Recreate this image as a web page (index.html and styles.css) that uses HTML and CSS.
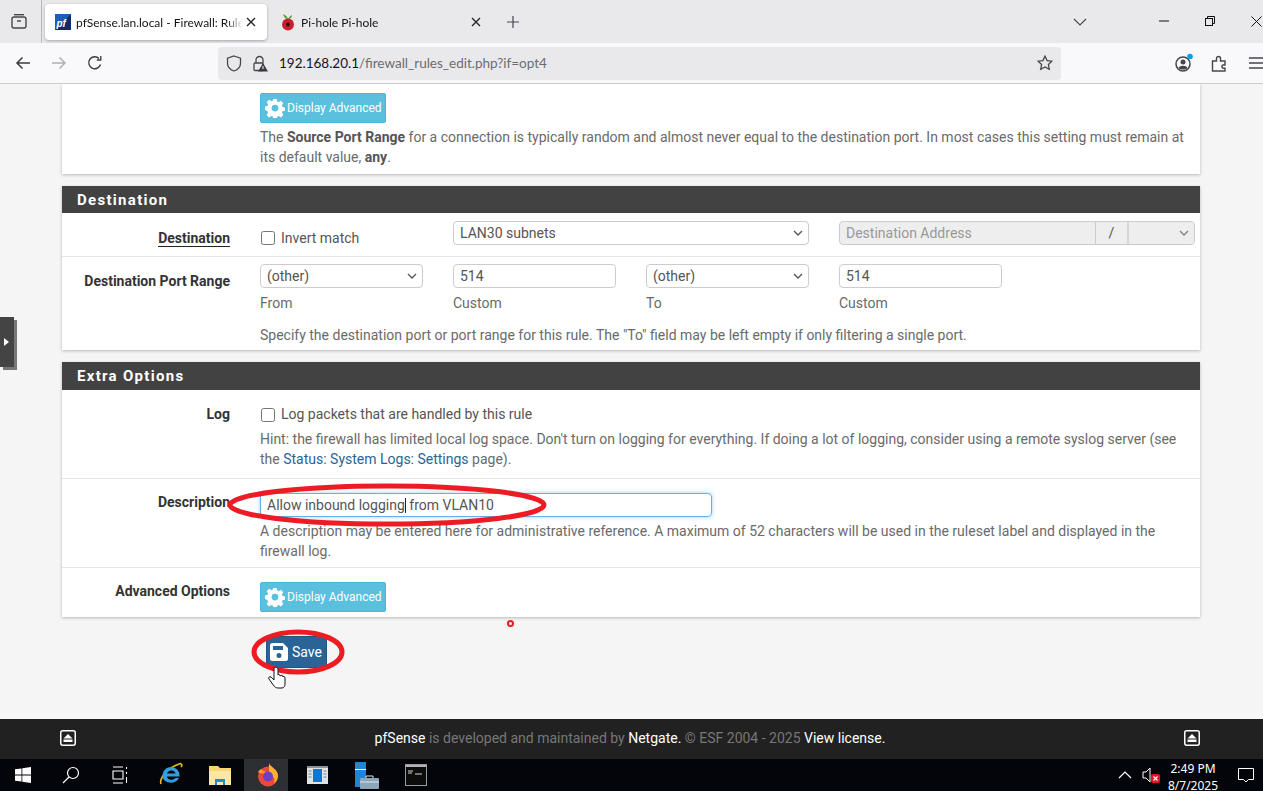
FILE: index.html
```html
<!DOCTYPE html>
<html lang="en">
<head>
    <meta charset="UTF-8">
    <title>pfSense.lan.local - Firewall: Rules: Edit</title>
    <link rel="stylesheet" href="styles.css">
</head>
<body>
    <div class="tabbar">
        <div class="tabs-btn">
            <svg width="18" height="18" viewBox="0 0 18 18" fill="none" stroke="#45454d" stroke-width="1.4"><path d="M4 2.7h10"/><rect x="2" y="5" width="14" height="11" rx="2"/><path d="M7 9h4"/></svg>
        </div>
        <div class="tab tab-active">
            <svg class="favicon" width="16" height="16" viewBox="0 0 16 16"><rect width="16" height="16" fill="#1c5fb5"/><path d="M0 16L16 0v16z" fill="#12296b"/><text x="1.5" y="12.5" class="pf-mark">pf</text></svg>
            <span class="tab-title">pfSense.lan.local - Firewall: Rules: Edit</span>
            <svg class="tab-x" width="10" height="10" viewBox="0 0 10 10" stroke="#26262b" stroke-width="1.4"><path d="M1 1l8 8M9 1L1 9"/></svg>
        </div>
        <div class="tab">
            <svg class="favicon" width="16" height="18" viewBox="0 0 16 18"><path d="M8 6C7 3 5 2 3 1c1 3 2 5 5 5zM8 6c1-2 2-3 4-4 0 2-1 4-4 4z" fill="#55a630"/><circle cx="8" cy="11.5" r="6" fill="#c9202f"/><circle cx="8" cy="11.5" r="2" fill="#3a0a10"/></svg>
            <span class="tab-title">Pi-hole Pi-hole</span>
            <svg class="tab-x" width="10" height="10" viewBox="0 0 10 10" stroke="#26262b" stroke-width="1.4"><path d="M1 1l8 8M9 1L1 9"/></svg>
        </div>
        <svg class="new-tab" width="14" height="14" viewBox="0 0 14 14" stroke="#45454d" stroke-width="1.2"><path d="M7 1v12M1 7h12"/></svg>
        <div class="tabbar-fill"></div>
        <svg class="list-all" width="14" height="8" viewBox="0 0 14 8" fill="none" stroke="#45454d" stroke-width="1.1"><path d="M1 1l6 6 6-6"/></svg>
        <div class="win-btns">
            <svg width="10" height="10" viewBox="0 0 10 10" stroke="#111" stroke-width="1"><path d="M0 5h10"/></svg>
            <svg width="10" height="10" viewBox="0 0 10 10" fill="none" stroke="#111" stroke-width="1"><rect x=".5" y="2.5" width="7" height="7"/><path d="M2.5 2.5v-2h7v7h-2"/></svg>
            <svg width="11" height="11" viewBox="0 0 11 11" stroke="#111" stroke-width="1"><path d="M.5.5l10 10M10.500.5l-10 10"/></svg>
        </div>
    </div>

    <div class="toolbar">
        <svg class="nav-icon" width="16" height="14" viewBox="0 0 16 14" fill="none" stroke="#3c3c42" stroke-width="1.5"><path d="M15 7H2M7.500 1.500L2 7l5.500 5.500"/></svg>
        <svg class="nav-icon" width="16" height="14" viewBox="0 0 16 14" fill="none" stroke="#b0b0b5" stroke-width="1.5"><path d="M1 7h13M8.500 1.500L14 7l-5.500 5.500"/></svg>
        <svg class="nav-icon nav-reload" width="16" height="16" viewBox="0 0 16 16" fill="none" stroke="#3c3c42" stroke-width="1.4"><path d="M13.500 9.500A6 6 0 1 1 12 3.500"/><path d="M13.800 1v4h-4" stroke-width="1.3"/></svg>
        <div class="urlbar">
            <svg class="url-shield" width="16" height="17" viewBox="0 0 16 17" fill="none" stroke="#45454d" stroke-width="1.3"><path d="M8 1l6.500 2.200v5C14.500 12 11.500 14.800 8 16 4.500 14.800 1.500 12 1.500 8.200v-5z"/></svg>
            <svg class="url-lock" width="16" height="17" viewBox="0 0 16 17"><path d="M4 8V5a3.500 3.500 0 0 1 7 0v3" fill="none" stroke="#45454d" stroke-width="1.300"/><rect x="2" y="8" width="9" height="7.500" rx="1" fill="none" stroke="#45454d" stroke-width="1.300"/><path d="M11 8l5 8.500H6z" fill="#3a3a40"/><path d="M11 11v3" stroke="#fff" stroke-width="1"/></svg>
            <span class="url-text"><span class="url-host">192.168.20.1</span>/firewall_rules_edit.php?if=opt4</span>
            <svg class="url-star" width="16" height="16" viewBox="0 0 16 16" fill="none" stroke="#45454d" stroke-width="1.300"><path d="M8 1.200l2.100 4.400 4.800.6-3.500 3.300.9 4.800L8 12l-4.300 2.300.9-4.800L1.100 6.200l4.800-.6z"/></svg>
        </div>
        <svg class="tool-icon tool-first" width="20" height="20" viewBox="0 0 20 20"><circle cx="9" cy="11" r="7" fill="none" stroke="#45454d" stroke-width="1.500"/><circle cx="9" cy="9" r="2.500" fill="#45454d"/><path d="M4.500 15c1-3 8-3 9 0-2 2-7 2-9 0z" fill="#45454d"/><circle cx="16" cy="3.500" r="2.800" fill="#0a9ee8"/></svg>
        <svg class="tool-icon" width="16" height="17" viewBox="0 0 16 17" fill="none" stroke="#45454d" stroke-width="1.400"><path d="M1.500 6h4V3.500a2 2 0 0 1 4 0V6h4.500v4H12a1.700 1.700 0 0 0 0 3.200h2V16H1.500z"/></svg>
        <svg class="tool-icon tool-menu" width="16" height="12" viewBox="0 0 16 12" stroke="#45454d" stroke-width="1.400"><path d="M1 1h15M1 6h15M1 11h15"/></svg>
    </div>

    <div class="page">
        <div class="sidebar-toggle"><span class="toggle-arrow"></span></div>

        <div class="panel panel-clipped">
            <div class="row">
                <div class="row-label"></div>
                <div class="row-body">
                    <a class="btn btn-info">
                        <svg class="btn-icon" width="20" height="20" viewBox="0 0 20 20"><path fill="#fff" fill-rule="evenodd" d="M8.300 1h3.400l.5 2.500 1.500.7 2.200-1.400 2.400 2.400-1.400 2.200.6 1.500 2.500.5v3.400l-2.500.5-.6 1.500 1.400 2.200-2.400 2.400-2.200-1.400-1.500.6-.5 2.400H8.300l-.5-2.400-1.500-.6-2.200 1.400-2.400-2.400 1.400-2.200-.6-1.500L0 11.800V8.400l2.500-.5.600-1.500-1.400-2.200 2.400-2.400 2.200 1.400 1.500-.7zM10 6.700a3.400 3.400 0 1 0 0 6.800 3.400 3.400 0 0 0 0-6.800z"/></svg>
                        Display Advanced
                    </a>
                    <p class="help">The <b>Source Port Range</b> for a connection is typically random and almost never equal to the destination port. In most cases this setting must remain at its default value, <b>any</b>.</p>
                </div>
            </div>
        </div>

        <div class="panel">
            <h2 class="panel-title">Destination</h2>
            <div class="row row-dest">
                <div class="row-label"><span class="underlined">Destination</span></div>
                <div class="row-body cols">
                    <label class="col check"><input type="checkbox" class="checkbox"> Invert match</label>
                    <div class="col col-wide">
                        <select class="field"><option>LAN30 subnets</option></select>
                    </div>
                    <div class="addr-group">
                        <input class="addr-input" disabled placeholder="Destination Address">
                        <span class="addr-slash">/</span>
                        <select class="addr-mask" disabled><option></option></select>
                    </div>
                </div>
            </div>
            <div class="row row-ports">
                <div class="row-label">Destination Port Range</div>
                <div class="row-body">
                    <div class="cols">
                        <div class="col"><select class="field"><option>(other)</option></select><div class="sub">From</div></div>
                        <div class="col"><input class="field" value="514"><div class="sub">Custom</div></div>
                        <div class="col"><select class="field"><option>(other)</option></select><div class="sub">To</div></div>
                        <div class="col"><input class="field" value="514"><div class="sub">Custom</div></div>
                    </div>
                    <p class="help help-ports">Specify the destination port or port range for this rule. The "To" field may be left empty if only filtering a single port.</p>
                </div>
            </div>
        </div>

        <div class="panel panel-extra">
            <h2 class="panel-title">Extra Options</h2>
            <div class="row row-log">
                <div class="row-label">Log</div>
                <div class="row-body">
                    <label class="check"><input type="checkbox" class="checkbox"> Log packets that are handled by this rule</label>
                    <p class="help">Hint: the firewall has limited local log space. Don't turn on logging for everything. If doing a lot of logging, consider using a remote syslog server (see the <a class="link">Status: System Logs: Settings</a> page).</p>
                </div>
            </div>
            <div class="row row-desc">
                <div class="row-label">Description</div>
                <div class="row-body">
                    <div class="field-focus">Allow inbound logging<span class="caret"></span> from VLAN10</div>
                    <p class="help">A description may be entered here for administrative reference. A maximum of 52 characters will be used in the ruleset label and displayed in the firewall log.</p>
                </div>
            </div>
            <div class="row row-adv">
                <div class="row-label">Advanced Options</div>
                <div class="row-body">
                    <a class="btn btn-info">
                        <svg class="btn-icon" width="20" height="20" viewBox="0 0 20 20"><path fill="#fff" fill-rule="evenodd" d="M8.300 1h3.400l.5 2.500 1.500.7 2.200-1.400 2.400 2.400-1.400 2.200.6 1.500 2.500.5v3.400l-2.500.5-.6 1.500 1.400 2.200-2.400 2.400-2.200-1.400-1.500.6-.5 2.400H8.300l-.5-2.400-1.500-.6-2.200 1.400-2.400-2.400 1.400-2.200-.6-1.500L0 11.800V8.400l2.500-.5.600-1.500-1.400-2.200 2.400-2.400 2.200 1.400 1.500-.7zM10 6.700a3.400 3.400 0 1 0 0 6.800 3.400 3.400 0 0 0 0-6.800z"/></svg>
                        Display Advanced
                    </a>
                </div>
            </div>
        </div>

        <div class="save-wrap">
            <a class="btn btn-save">
                <svg class="btn-icon" width="18" height="18" viewBox="0 0 18 18"><path fill="#fff" fill-rule="evenodd" d="M2.500 0H13l5 5v10.500a2.500 2.500 0 0 1-2.500 2.500h-13A2.500 2.500 0 0 1 0 15.500v-13A2.500 2.500 0 0 1 2.500 0zM3 3v4h10V3zM9 10a2.500 2.500 0 1 0 0 5 2.500 2.500 0 0 0 0-5z"/></svg>
                Save
            </a>
        </div>

        <!-- red marks drawn on the screenshot -->
        <svg class="marks" width="1263" height="635" viewBox="0 84 1263 635" fill="none">
            <ellipse cx="387" cy="505" rx="157" ry="19" stroke="#ed1c24" stroke-width="5"/>
            <ellipse cx="298" cy="652" rx="44" ry="20" stroke="#ed1c24" stroke-width="5"/>
            <circle cx="510.500" cy="623.500" r="2.500" stroke="#ed1c24" stroke-width="2"/>
            <path d="M274 668v12l-3-3c-2-1-3 1-2 2l5 7c1 1 2 2 4 2h4c2 0 3-2 3-4v-6c0-2-2-2-2-1 0-2-2-2-3-1 0-2-2-2-2-1v-6c0-2-4-2-4-1z" fill="#fff" stroke="#111" stroke-width="1"/>
        </svg>
    </div>

    <div class="footer">
        <svg width="16" height="16" viewBox="0 0 16 16"><rect x=".75" y=".75" width="14.500" height="14.500" rx="2" fill="#222" stroke="#fff" stroke-width="1.500"/><path d="M8 4l4.500 4.500h-9z" fill="#fff"/><path d="M3.500 9.500h9v2.500h-9z" fill="#fff"/></svg>
        <div class="footer-text"><b>pfSense</b> is developed and maintained by <b>Netgate.</b> © ESF 2004 - 2025 <b>View license.</b></div>
        <svg width="16" height="16" viewBox="0 0 16 16"><rect x=".75" y=".75" width="14.500" height="14.500" rx="2" fill="#222" stroke="#fff" stroke-width="1.500"/><path d="M8 4l4.500 4.500h-9z" fill="#fff"/><path d="M3.500 9.500h9v2.500h-9z" fill="#fff"/></svg>
    </div>

    <div class="taskbar">
        <div class="task-item">
            <svg width="16" height="16" viewBox="0 0 16 16" fill="#fff"><path d="M0 2.300l6.500-.9v6.200H0zM7.300 1.300L16 0v7.600H7.300zM0 8.400h6.500v6.200L0 13.700zM7.300 8.400H16V16l-8.700-1.200z"/></svg>
        </div>
        <div class="task-item">
            <svg width="18" height="18" viewBox="0 0 18 18" fill="none" stroke="#fff" stroke-width="1.200"><circle cx="11" cy="7" r="5.500"/><path d="M7 11l-6 6"/></svg>
        </div>
        <div class="task-item">
            <svg width="16" height="18" viewBox="0 0 16 18" fill="none" stroke="#fff" stroke-width="1.100"><path d="M1 1h10M1 17h10M1 5h10v8H1zM14.500 1v2M14.500 6v2M14.500 11v6"/></svg>
        </div>
        <div class="task-item task-ie">
            <svg width="24" height="26" viewBox="0 0 24 26"><path d="M2 22C0 17 8 6 20 2c2-1 4 1 2 3" fill="none" stroke="#e8b923" stroke-width="1.600"/><path fill="#2f9fe0" fill-rule="evenodd" d="M12 5a8.500 8.500 0 0 1 8.500 9.500H8c.3 3.500 6 4.500 8.500 1.500h3.500C17 23 4 22 3.500 14 3.500 9 7 5 12 5zM8 11.500h8.500C16 7.500 9 7.500 8 11.500z"/></svg>
        </div>
        <div class="task-item">
            <svg width="22" height="21" viewBox="0 0 22 21"><path d="M0 1h9l2 2h11v17H0z" fill="#f7d774"/><path d="M0 6h22v14H0z" fill="#fce8a3"/><path d="M6 14h10v6h-2v-3H8v3H6z" fill="#1b8fd6"/></svg>
        </div>
        <div class="task-item task-current">
            <svg width="22" height="24" viewBox="0 0 22 24"><circle cx="11" cy="13.500" r="10" fill="#e8493a"/><path d="M12 0c1 4 9 6 9 13 0 3-2 6-4 7 2-5-2-8-5-9z" fill="#ffb02e"/><path d="M1 9c1-2 3-3 4-3 0 2 3 3 5 3-3 2-6 2-9 0z" fill="#ff9a2e"/><circle cx="11" cy="13.500" r="5" fill="#6d3fc4"/></svg>
        </div>
        <div class="task-item">
            <svg width="21" height="18" viewBox="0 0 21 18"><rect width="21" height="18" fill="#dfe3e8"/><rect y="0" width="21" height="2" fill="#8a929a"/><rect x="6" y="3" width="9" height="13" fill="#0a78d4"/><path d="M1.500 5h3M1.500 8h3M1.500 11h3M16.500 5h3M16.500 8h3M16.500 11h3" stroke="#7a828a"/></svg>
        </div>
        <div class="task-item">
            <svg width="24" height="28" viewBox="0 0 24 28"><rect x="0" y="1" width="11" height="25" fill="#1f86d6"/><path d="M0 8h11v1H0z" fill="#fff"/><rect x="5" y="17" width="19" height="11" rx="1" fill="#8da5b8"/><path d="M5 21h19" stroke="#dfe7ee"/><path d="M11 17v-2h7v2" fill="none" stroke="#dfe7ee"/></svg>
        </div>
        <div class="task-item">
            <svg width="22" height="22" viewBox="0 0 22 22"><rect x=".5" y=".5" width="21" height="21" fill="#0c0c0c" stroke="#9a9a9a"/><rect x="1" y="1" width="20" height="2" fill="#b5b5b5"/><path d="M3 7h5M3 9h4M10 10h7" stroke="#d5d5d5"/></svg>
        </div>
        <div class="tray">
            <svg width="14" height="8" viewBox="0 0 14 8" fill="none" stroke="#fff" stroke-width="1.200"><path d="M1 7l6-6 6 6"/></svg>
            <svg class="tray-sound" width="20" height="16" viewBox="0 0 20 16"><path d="M1 5h3l4-4v14l-4-4H1z" fill="none" stroke="#fff" stroke-width="1"/><rect x="9" y="7" width="9" height="9" rx="2" fill="#e81123"/><path d="M11.500 9.500l4 4M15.500 9.500l-4 4" stroke="#fff" stroke-width="1.200"/></svg>
            <div class="clock"><div>2:49 PM</div><div>8/7/2025</div></div>
            <svg class="tray-note" width="16" height="15" viewBox="0 0 16 15" fill="none" stroke="#fff" stroke-width="1"><path d="M.5.5h15v11h-5L8 14l-2.500-2.500h-5z"/></svg>
        </div>
    </div>
</body>
</html>
```

FILE: styles.css
```css
*{
    margin: 0;
    padding: 0;
    box-sizing: border-box;
}
html,body{
    height: 100%;
    overflow: hidden;
}
body{
    display: flex;
    flex-direction: column;
    font: 14px/20px Roboto, "Liberation Sans", sans-serif;
    color: #555;
    background: #f5f5f5;
}

/* browser tabs */
.tabbar{
    height: 43px;
    flex: none;
    display: flex;
    align-items: center;
    background: #e9e9ec;
    font: 12px Lato, sans-serif;
    color: #15141a;
}
.tabs-btn{
    width: 42px;
    height: 43px;
    padding: 12px 0 0 10px;
    border-right: 1px solid #b8b8bc;
    margin-right: 3px;
}
.tab{
    width: 222px;
    height: 36px;
    display: flex;
    align-items: center;
    padding: 0 10px;
    border-radius: 4px;
    margin-top: 1px;
}
.tab-active{
    background: #fff;
    box-shadow: 0 1px 3px rgba(0,0,0,.3);
    margin-right: 3px;
}
.favicon{
    flex: none;
    margin-right: 5px;
}
.pf-mark{
    font: italic 700 10px "Liberation Sans", sans-serif;
    fill: #fff;
}
.tab-title{
    flex: 1;
    white-space: nowrap;
    overflow: hidden;
    -webkit-mask-image: linear-gradient(to right, #000 90%, transparent);
    mask-image: linear-gradient(to right, #000 90%, transparent);
}
.tab-x{
    flex: none;
    margin-left: 3px;
    margin-right: 1px;
}
.new-tab{
    flex: none;
    margin-left: 14px;
}
.tabbar-fill{
    flex: 1;
}
.list-all{
    flex: none;
    margin-right: 72px;
}
.win-btns{
    display: flex;
    align-items: center;
    gap: 36px;
    padding-right: 1px;
    margin-top: -1px;
}

/* url row */
.toolbar{
    height: 41px;
    flex: none;
    display: flex;
    align-items: center;
    background: #f9f9fb;
    border-bottom: 1px solid #ccc;
    padding-left: 15px;
}
.nav-icon{
    flex: none;
    margin-right: 20px;
}
.nav-reload{
    margin-right: 115px;
}
.urlbar{
    width: 843px;
    height: 33px;
    flex: none;
    display: flex;
    align-items: center;
    background: #e9e9ec;
    border-radius: 4px;
    padding: 0 8px;
    font: 13.500px Lato, sans-serif;
    color: #6c6c70;
}
.url-shield{
    flex: none;
    margin-right: 10px;
}
.url-lock{
    flex: none;
    margin-right: 11px;
}
.url-text{
    flex: 1;
    white-space: nowrap;
}
.url-host{
    color: #15141a;
}
.tool-icon{
    flex: none;
    margin-left: 17px;
}
.tool-first{
    margin-left: 113px;
}
.tool-menu{
    margin-left: 21px;
}

/* page */
.page{
    flex: 1;
    position: relative;
    overflow: hidden;
    padding: 0 63px 0 62px;
    background: #f5f5f5;
}
.sidebar-toggle{
    position: absolute;
    left: 0;
    top: 233px;
    width: 14px;
    height: 50px;
    background: #444;
    box-shadow: 3px 3px 0 #777;
    display: flex;
    align-items: center;
    padding-left: 4px;
}
.toggle-arrow{
    border-left: 5px solid #fff;
    border-top: 4px solid transparent;
    border-bottom: 4px solid transparent;
}
.panel{
    background: #fff;
    box-shadow: 0 1px 3px rgba(0,0,0,.25);
    margin-bottom: 12px;
}
.panel-clipped{
    height: 90px;
    padding-top: 9px;
}
.panel-extra{
    margin-bottom: 0;
}
.panel-title{
    height: 27px;
    padding-left: 15px;
    background: #424242;
    color: #fff;
    font: 700 15px/28px Roboto, sans-serif;
    letter-spacing: 1.300px;
}
.panel-extra .panel-title{
    height: 28px;
    line-height: 29px;
}
.row{
    display: flex;
    border-bottom: 1px solid #e5e5e5;
}
.panel-clipped .row{
    border-bottom: 0;
}
.row-label{
    width: 168px;
    flex: none;
    text-align: right;
    font-weight: 700;
    color: #333;
    padding-top: 14px;
}
.row-body{
    flex: 1;
    margin-left: 30px;
    padding-right: 5px;
}
.underlined{
    border-bottom: 1px solid #222;
}
.help{
    color: #6a6a6a;
    margin-top: 4px;
}
.help b{
    color: #555;
}
.link{
    color: #2a6496;
}
.cols{
    display: flex;
}
.col{
    width: 163px;
    margin-right: 30px;
    flex: none;
}
.col-wide{
    width: 356px;
    margin-right: 30px;
}
.check{
    display: flex;
    align-items: center;
    color: #555;
}
.checkbox{
    appearance: none;
    width: 14px;
    height: 14px;
    margin: 1px 6px 0 1px;
    background: #fff;
    border: 1px solid #767676;
    border-radius: 2.500px;
    flex: none;
}
.field{
    width: 100%;
    height: 24px;
    display: block;
    font: 14px Roboto, sans-serif;
    color: #555;
    border: 1px solid #ccc;
    border-radius: 4px;
    padding: 0 6px;
    background: #fff;
    outline: 0;
}
select.field,
.addr-mask{
    appearance: none;
    background-image: url("data:image/svg+xml,%3Csvg xmlns='http://www.w3.org/2000/svg' width='10' height='6'%3E%3Cpath d='M1 1l4 4 4-4' fill='none' stroke='%23555' stroke-width='1.300'/%3E%3C/svg%3E");
    background-repeat: no-repeat;
    background-position: right 5px center;
}
.row-dest{
    height: 44px;
}
.row-dest .row-label{
    padding-top: 15px;
}
.row-dest .row-body{
    padding-top: 8px;
}
.row-dest .check{
    height: 33px;
    align-self: flex-start;
}
.addr-group{
    width: 356px;
    height: 24px;
    flex: none;
    display: flex;
    border: 1px solid #ccc;
    border-radius: 4px;
    background: #eee;
    overflow: hidden;
}
.addr-input{
    flex: 1;
    min-width: 0;
    border: 0;
    background: none;
    padding: 0 6px;
    font: 14px Roboto, sans-serif;
}
.addr-input::placeholder{
    color: #999;
}
.addr-slash{
    width: 32px;
    flex: none;
    text-align: center;
    line-height: 22px;
    border-left: 1px solid #ccc;
    color: #555;
}
.addr-mask{
    width: 67px;
    flex: none;
    border: 0;
    border-left: 2px solid #ccc;
    background-color: #eee;
}
.row-ports{
    height: 93px;
    border-bottom: 0;
}
.row-ports .row-body{
    padding-top: 7px;
}
.sub{
    color: #6a6a6a;
    margin-top: 5px;
}
.help-ports{
    margin-top: 12px;
}
.row-log{
    height: 89px;
}
.row-log .row-label,
.row-log .row-body{
    padding-top: 14px;
}
.row-log .help{
    margin-top: 5px;
}
.row-desc{
    height: 89px;
}
.row-desc .row-label{
    padding-top: 13px;
}
.row-desc .row-body{
    padding-top: 14px;
}
.field-focus{
    width: 452px;
    height: 24px;
    border: 1px solid #66afe9;
    border-radius: 4px;
    box-shadow: 0 0 4px rgba(102,175,233,.6);
    padding: 0 6px;
    line-height: 22px;
    color: #555;
}
.caret{
    display: inline-block;
    width: 1px;
    height: 15px;
    background: #222;
    vertical-align: -3px;
}
.row-adv{
    height: 49px;
    border-bottom: 0;
}
.row-adv .row-label{
    padding-top: 13px;
}
.row-adv .row-body{
    padding-top: 14px;
}

/* buttons */
.btn{
    display: inline-flex;
    align-items: center;
    border-radius: 2px;
    color: #fff;
    font-size: 12px;
}
.btn-info{
    width: 126px;
    height: 30px;
    background: #5bc0de;
    border: 1px solid #46b8da;
    padding-left: 4px;
    gap: 2px;
}
.btn-save{
    width: 61px;
    height: 32px;
    background: #2a6496;
    border: 1px solid #245682;
    padding-left: 3px;
    gap: 4px;
    font-size: 14px;
}
.btn-icon{
    flex: none;
}
.save-wrap{
    padding: 19px 0 0 204px;
}
.marks{
    position: absolute;
    left: 0;
    top: 0;
    pointer-events: none;
}

/* footer */
.footer{
    height: 40px;
    flex: none;
    display: flex;
    align-items: center;
    justify-content: space-between;
    padding: 0 63px 2px 60px;
    background: #212121;
    color: #777;
    font-size: 14px;
}
.footer-text b{
    font-weight: 400;
    color: #fff;
}

/* windows taskbar */
.taskbar{
    height: 32px;
    flex: none;
    display: flex;
    background: #03050a;
}
.task-item{
    width: 49px;
    flex: none;
    display: flex;
    align-items: center;
    justify-content: center;
    overflow: hidden;
}
.task-item:first-child{
    width: 46px;
}
.task-ie{
    margin-left: 2px;
}
.task-current{
    width: 44px;
    margin-right: 5px;
    padding-left: 4px;
    background: #2e2f33;
}
.tray{
    flex: 1;
    display: flex;
    align-items: center;
    justify-content: flex-end;
    color: #fff;
    font: 12px/17px "Noto Sans", sans-serif;
}
.tray-sound{
    margin-left: 10px;
}
.clock{
    width: 68px;
    margin-left: -3px;
    text-align: center;
    padding-top: 1px;
    height: 32px;
    overflow: hidden;
}
.tray-note{
    margin: 0 9px 0 11px;
}
```
